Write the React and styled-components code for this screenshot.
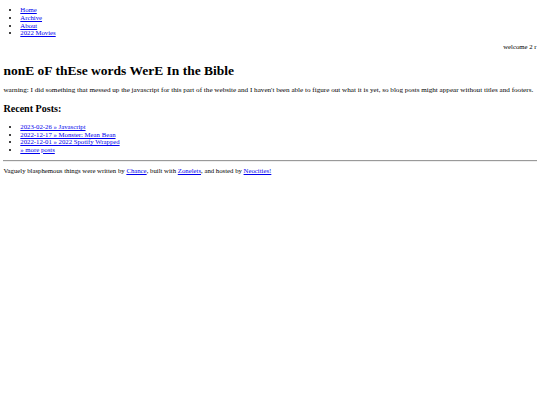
import React from 'react';
import styled, { createGlobalStyle } from 'styled-components';

const Global = createGlobalStyle`
  html, body {
    background: #fff;
  }
  body {
    margin: 0 3.4px;
    padding-top: 6.4px;
    font-family: "Liberation Serif", "Times New Roman", serif;
    font-size: 6.75px;
    line-height: 7.6px;
    color: #000;
  }
`

const NavList = styled.ul`
  margin: 0 0 6.4px;
  padding-left: 16.9px;
  list-style: disc;
`

const Link = styled.a`
  color: #0000ee;
  text-decoration: underline;
`

const Marquee = styled.div`
  overflow: hidden;
  white-space: nowrap;
  text-align: right;
`

const Title = styled.h1`
  font-size: 13.5px;
  line-height: 15.5px;
  font-weight: bold;
  margin: 12.4px 0 8.5px;
`

const Warning = styled.p`
  font-size: 7.13px;
  margin: 0;
`

const Heading = styled.h2`
  font-size: 10.1px;
  line-height: 11.6px;
  font-weight: bold;
  margin: 8.4px 0;
`

const PostList = styled.ul`
  margin: 0 0 6.8px;
  padding-left: 16.9px;
  list-style: disc;
`

const Rule = styled.hr`
  margin: 0;
  border: 0;
  border-top: 1px solid #9a9a9a;
  border-bottom: 1px solid #eee;
  height: 0;
`

const Footer = styled.p`
  margin: 4.9px 0 0;
`

const nav = ['Home', 'Archive', 'About', '2022 Movies'];
const posts = [
  '2023-02-26 » Javascript',
  '2022-12-17 » Monster: Mean Bean',
  '2022-12-01 » 2022 Spotify Wrapped',
  '» more posts',
];

export default function App() {
  return (
    <>
      <Global />
      <NavList>
        {nav.map((n) => (
          <li key={n}><Link href="#">{n}</Link></li>
        ))}
      </NavList>
      <Marquee>welcome 2 r</Marquee>
      <Title>nonE oF thEse words WerE In the Bible</Title>
      <Warning>
        warning: I did something that messed up the javascript for this part of the website and I haven't been able to figure out what it is yet, so blog posts might appear without titles and footers.
      </Warning>
      <Heading>Recent Posts:</Heading>
      <PostList>
        {posts.map((p) => (
          <li key={p}><Link href="#">{p}</Link></li>
        ))}
      </PostList>
      <Rule />
      <Footer>
        Vaguely blasphemous things were written by <Link href="#">Chance</Link>, built with <Link href="#">Zonelets</Link>, and hosted by <Link href="#">Neocities!</Link>
      </Footer>
    </>
  );
}
